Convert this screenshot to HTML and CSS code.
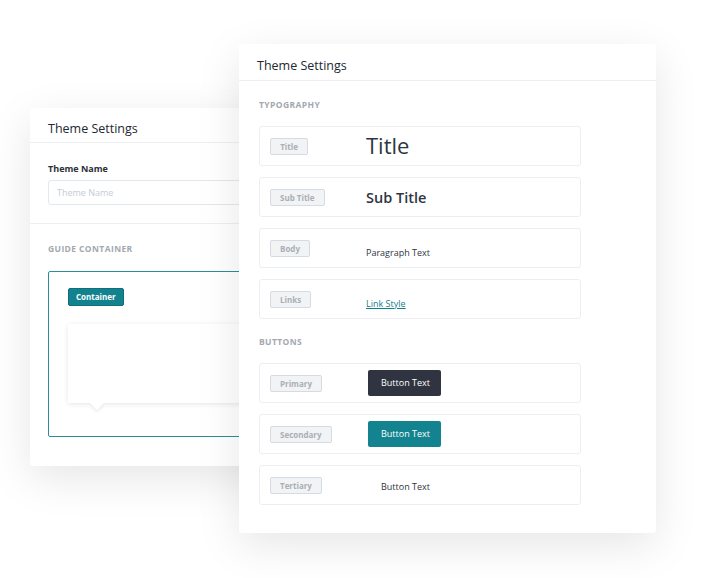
FILE: index.html
```html
<!DOCTYPE html>
<html lang="en">
<head>
    <meta charset="UTF-8">
    <meta name="viewport" content="width=device-width, initial-scale=1.0">
    <title>Theme Settings</title>
    <link rel="stylesheet" href="styles.css">
</head>
<body>
<div id="stage">
    <div class="panel panel-back">
        <div class="panel-header">Theme Settings</div>
        <div class="field">
            <label class="field-label">Theme Name</label>
            <input class="field-input" type="text" placeholder="Theme Name">
        </div>
        <div class="section">
            <div class="section-title">Guide Container</div>
            <div class="guide-box">
                <span class="badge">Container</span>
                <div class="bubble"></div>
            </div>
        </div>
    </div>

    <div class="panel panel-front">
        <div class="panel-header">Theme Settings</div>
        <div class="section">
            <div class="section-title">Typography</div>
            <div class="rows">
                <div class="row">
                    <span class="tag">Title</span>
                    <span class="value value-title">Title</span>
                </div>
                <div class="row">
                    <span class="tag">Sub Title</span>
                    <span class="value value-sub">Sub Title</span>
                </div>
                <div class="row">
                    <span class="tag">Body</span>
                    <span class="value value-low">Paragraph Text</span>
                </div>
                <div class="row">
                    <span class="tag">Links</span>
                    <a class="value value-low value-link" href="#">Link Style</a>
                </div>
            </div>
            <div class="section-title section-title-gap">Buttons</div>
            <div class="rows">
                <div class="row">
                    <span class="tag">Primary</span>
                    <span class="btn btn-primary">Button Text</span>
                </div>
                <div class="row">
                    <span class="tag">Secondary</span>
                    <span class="btn btn-secondary">Button Text</span>
                </div>
                <div class="row">
                    <span class="tag">Tertiary</span>
                    <span class="btn btn-tertiary">Button Text</span>
                </div>
            </div>
        </div>
    </div>
</div>
</body>
</html>
```

FILE: styles.css
```css
body {
    margin: 0;
    background: #fff;
    font-family: "Open Sans", "Liberation Sans", sans-serif;
    color: #2f3541;
    overflow: hidden;
}
#stage {
    position: relative;
    width: 701px;
    height: 578px;
}
.panel {
    position: absolute; /* 겹쳐진 창 */
    background: #fff;
    border-radius: 3px;
    box-shadow: 0 12px 44px rgba(0, 0, 0, 0.1);
    box-sizing: border-box;
}
.panel-back {
    left: 30px;
    top: 108px;
    width: 300px;
    height: 358px;
}
.panel-front {
    left: 239px;
    top: 44px;
    width: 417px;
    height: 489px;
}
.panel-header {
    height: 35px;
    box-sizing: border-box;
    padding: 13px 0 0 18px;
    line-height: 16px;
    font-size: 12.5px;
    color: #222831;
    border-bottom: 1px solid #edeff1;
}
.panel-front .panel-header {
    height: 37px;
    padding-top: 14px;
}
.field {
    padding: 19px 18px 18px;
    border-bottom: 1px solid #edeff1;
    display: flex;
    flex-direction: column;
}
.field-label {
    font-size: 9px;
    font-weight: 700;
    color: #2a2f38;
    margin-bottom: 5px;
}
.field-input {
    height: 25px;
    box-sizing: border-box;
    border: 1px solid #e3e8ed;
    border-radius: 3px;
    padding: 0 8px;
    font-family: inherit;
    font-size: 9px;
    width: 280px;
}
.field-input::placeholder {
    color: #c4ccd6;
}
.section {
    padding: 19px 18px 0;
}
.panel-front .section {
    padding: 18px 20px 0;
}
.section-title {
    font-size: 8.5px;
    font-weight: 700;
    letter-spacing: 0.4px;
    text-transform: uppercase;
    color: #a3a8af;
    line-height: 12px;
}
.section-title-gap {
    margin-top: 17px;
}
.guide-box {
    margin-top: 16px;
    height: 166px;
    box-sizing: border-box;
    border: 1px solid #2b8e9a;
    border-radius: 2px;
    padding: 16px 0 0 19px;
    width: 300px;
    display: flex;
    flex-direction: column;
    align-items: flex-start;
}
.badge {
    background: #12828f;
    color: #fff;
    font-size: 8px;
    font-weight: 700;
    padding: 2px 7px;
    line-height: 12px;
    border-radius: 2px;
    border: 1px solid #0f6f7b;
}
.bubble {
    position: relative;
    margin-top: 18px;
    height: 79px;
    align-self: stretch;
    background: #fff;
    box-shadow: 0 1px 5px rgba(0, 0, 0, 0.1);
}
.bubble::after {
    content: "";
    position: absolute;
    left: 24px;
    bottom: -5px;
    width: 10px;
    height: 10px;
    background: #fff;
    transform: rotate(45deg);
    box-shadow: 2px 2px 3px rgba(0, 0, 0, 0.06);
}
.rows {
    margin-top: 15px;
    display: flex;
    flex-direction: column;
    gap: 11px;
    width: 322px;
}
.row {
    height: 40px;
    box-sizing: border-box;
    border: 1px solid #eceef1;
    border-radius: 3px;
    display: flex;
    align-items: center;
    padding-left: 10px;
}
.tag {
    min-width: 38px;
    box-sizing: border-box;
    padding: 0 9px;
    height: 17px;
    line-height: 15px;
    text-align: center;
    font-size: 8px;
    font-weight: 700;
    color: #a9afb7;
    background: #f2f3f5;
    border: 1px solid #d4dbe2;
    border-radius: 2px;
    margin-right: auto;
    flex: none;
}
.value {
    width: 214px;
    flex: none;
    color: #2f3541;
    font-size: 9px;
}
.value-title {
    font-size: 22px;
    line-height: 26px;
    padding-bottom: 2px;
}
.value-sub {
    font-size: 14.5px;
    font-weight: 600;
    padding-top: 1px;
}
.value-low {
    padding-top: 8px;
}
.value-link {
    color: #137f8c;
    text-decoration: underline;
}
.btn {
    flex: none;
    box-sizing: border-box;
    margin-left: 2px;
    font-size: 9px;
    white-space: nowrap;
}
.btn-primary, .btn-secondary {
    height: 26px;
    line-height: 26px;
    color: #fff;
    border-radius: 2px;
    padding: 0 13px;
    width: 73px;
    margin-right: 139px;
}
.btn-primary {
    background: #2f3440;
}
.btn-secondary {
    background: #13838f;
}
.btn-tertiary {
    width: 212px;
    color: #2f3541;
    padding: 3px 13px 0;
}
```
